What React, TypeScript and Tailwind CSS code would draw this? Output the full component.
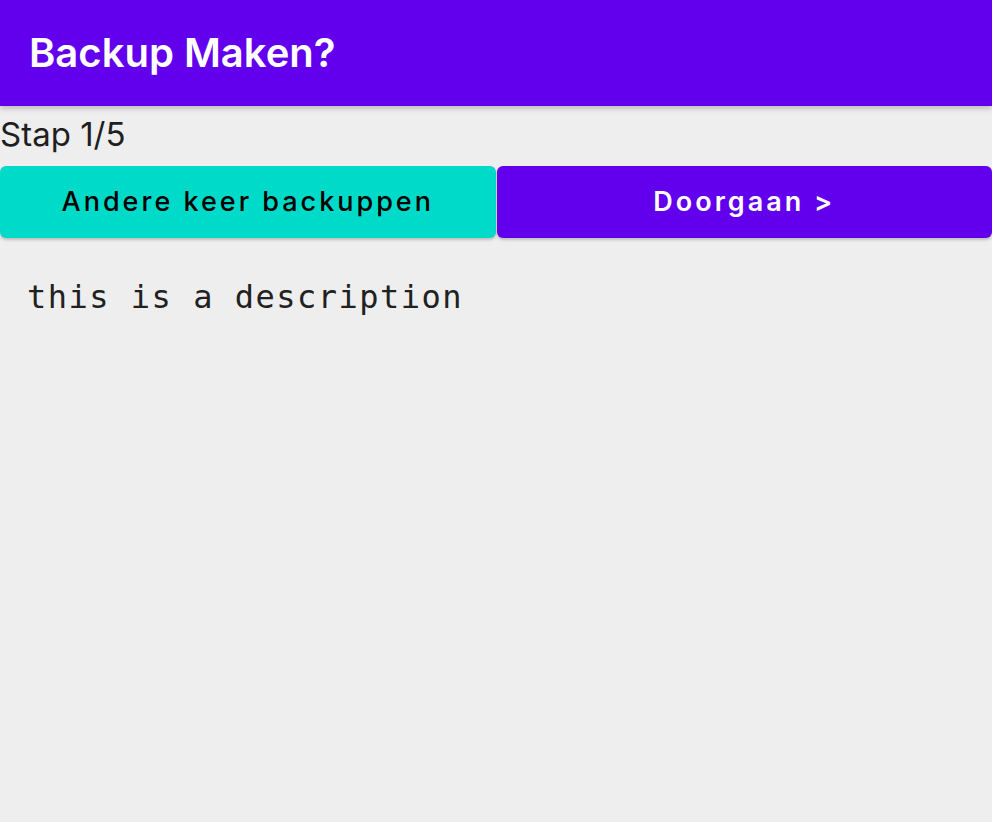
export default function App() {
  return (
    <div className="min-h-[822px] bg-[#eeeeee] font-['Inter',sans-serif] text-[#1f1f1f]">
      <header className="h-[106px] bg-[#6200ee] flex items-center px-[29px] shadow-[0_2px_6px_rgba(0,0,0,0.25)]">
        <h1 className="text-[40px] font-semibold text-white leading-none">Backup Maken?</h1>
      </header>
      <p className="text-[33px] leading-[56px]">Stap 1/5</p>
      <div className="flex gap-px mt-[4px]">
        <button className="flex-1 h-[72px] rounded-[6px] bg-[#00dac8] text-black text-[27px] font-medium tracking-[3px] shadow-[0_2px_3px_rgba(0,0,0,0.2)]">
          Andere keer backuppen
        </button>
        <button className="flex-1 h-[72px] rounded-[6px] bg-[#6200ee] text-white text-[27px] font-semibold tracking-[3px] shadow-[0_2px_3px_rgba(0,0,0,0.2)]">
          Doorgaan &gt;
        </button>
      </div>
      <p className="px-[27px] pt-[35px] font-['DejaVu_Sans_Mono',monospace] text-[32px] text-[#212121] tracking-[1.5px]">
        this is a description
      </p>
    </div>
  );
}
